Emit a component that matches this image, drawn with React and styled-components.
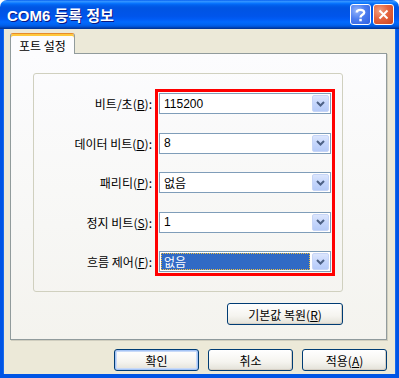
import React from "react";
import styled, { createGlobalStyle } from "styled-components";

const GlobalStyle = createGlobalStyle`
    html, body {
        margin: 0;
        padding: 0;
        background: #ffffff;
    }
    body {
        font-family: "Liberation Sans", "Noto Sans CJK KR", sans-serif;
        font-size: 12px;
        color: #000000;
    }
`;

const Window = styled.div`
    width: 399px;
    height: 378px;
    display: flex;
    flex-direction: column;
    box-sizing: border-box;
`;

const TitleBar = styled.div`
    height: 29px;
    flex: none;
    display: flex;
    align-items: center;
    padding: 0 5px 0 7px;
    border-radius: 7px 7px 0 0;
    background: linear-gradient(
        to bottom,
        #0058ee 0%,
        #3593ff 4%,
        #288eff 7%,
        #127dff 10%,
        #036ffc 13%,
        #0262ee 17%,
        #0057e5 24%,
        #0054e3 30%,
        #0055eb 56%,
        #005bf5 66%,
        #026afe 76%,
        #0062ef 86%,
        #0052d6 92%,
        #0040ab 96%,
        #003092 100%
    );
`;

const Title = styled.div`
    flex: 1;
    color: #ffffff;
    font-family: "Liberation Sans", "Noto Sans CJK KR", sans-serif;
    font-weight: bold;
    font-size: 15px;
    text-shadow: 1px 1px 0 #0a1883;
`;

const CaptionButton = styled.div`
    width: 21px;
    height: 21px;
    box-sizing: border-box;
    border: 1px solid #ffffff;
    border-radius: 3px;
    margin-left: 2px;
    display: flex;
    align-items: center;
    justify-content: center;
    background: ${(p) =>
        p.$close
            ? "radial-gradient(circle at 30% 30%, #f2a080 0%, #e4643f 45%, #cc4420 100%)"
            : "radial-gradient(circle at 30% 30%, #93b4fa 0%, #4d7ef0 45%, #2c5fe0 100%)"};
`;

const Body = styled.div`
    flex: 1;
    display: flex;
    flex-direction: column;
    background: #ece9d8;
    border-left: 3px solid #0055e5;
    border-right: 3px solid #0055e5;
    border-bottom: 4px solid #0055e5;
    box-shadow: inset 1px 0 0 #166aee, inset -1px 0 0 #166aee;
    padding: 4px 9px 0 7px;
`;

const TabRow = styled.div`
    display: flex;
    position: relative;
    z-index: 1;
    margin-bottom: -1px;
`;

const Tab = styled.div`
    height: 21px;
    box-sizing: border-box;
    padding: 3px 8px 0 8px;
    border: 1px solid #919b9c;
    border-bottom: none;
    border-top: 1px solid #e68b2c;
    border-radius: 3px 3px 0 0;
    box-shadow: inset 0 2px 0 #ffc83c;
    background: #fcfcfe;
    font-family: "Noto Sans CJK KR", sans-serif;
    font-size: 12px;
    line-height: 17px;
`;

const Panel = styled.div`
    height: 287px;
    box-sizing: border-box;
    border: 1px solid #919b9c;
    box-shadow: 1px 1px 0 #d0cebf;
    background: linear-gradient(to bottom, #fcfcfe 0%, #f7f7f5 60%, #f4f3ee 100%);
    padding: 19px 43px 0 22px;
    display: flex;
    flex-direction: column;
`;

const GroupBox = styled.div`
    height: 219px;
    box-sizing: border-box;
    border: 1px solid #d0d0bf;
    border-radius: 3px;
    padding: 15px 7px 0 0;
    display: flex;
    align-items: flex-start;
`;

const LabelColumn = styled.div`
    flex: 1;
    margin-right: 3px;
    padding-top: 4px;
    display: flex;
    flex-direction: column;
    gap: 18.5px;
`;

const Label = styled.div`
    height: 21px;
    line-height: 21px;
    text-align: right;
    font-family: "Noto Sans CJK KR", sans-serif;
    font-size: 12px;
    white-space: nowrap;
`;

const Highlight = styled.div`
    width: 180px;
    box-sizing: border-box;
    border: 3px solid #ff0000;
    padding: 1px;
    display: flex;
    flex-direction: column;
    gap: 18.5px;
`;

const Combo = styled.div`
    height: 21px;
    box-sizing: border-box;
    border: 1px solid #7f9db9;
    background: #ffffff;
    display: flex;
    align-items: stretch;
    padding: 1px;
`;

const ComboText = styled.div`
    flex: 1;
    display: flex;
    align-items: center;
    padding-left: 3px;
    margin-right: 2px;
    font-family: "Liberation Sans", "Noto Sans CJK KR", sans-serif;
    font-size: 12px;
    color: ${(p) => (p.$selected ? "#ffffff" : "#000000")};
    background: ${(p) => (p.$selected ? "#316ac5" : "transparent")};
    outline: ${(p) => (p.$selected ? "1px dotted #f0c040" : "none")};
    outline-offset: -1px;
`;

const DropButton = styled.div`
    width: 17px;
    box-sizing: border-box;
    border: 1px solid #c6d5f7;
    border-radius: 2px;
    background: linear-gradient(to bottom, #dce6fd 0%, #c5d6fc 50%, #b6cbf8 100%);
    display: flex;
    align-items: center;
    justify-content: center;
`;

const RestoreRow = styled.div`
    display: flex;
    justify-content: flex-end;
    margin-top: 11px;
`;

const Button = styled.div`
    width: ${(p) => p.$width || 85}px;
    height: 22px;
    box-sizing: border-box;
    border: 1px solid #003c74;
    border-radius: 3px;
    background: linear-gradient(to bottom, #ffffff 0%, #f5f4ef 60%, #e3e1d8 100%);
    box-shadow: ${(p) =>
        p.$default
            ? "inset 0 0 0 1px #a5c4f5, inset 0 0 0 2px #c8daf8"
            : "inset -1px -1px 0 #d6d0c5"};
    display: flex;
    align-items: center;
    justify-content: center;
    font-family: "Noto Sans CJK KR", sans-serif;
    font-size: 12px;
`;

const ButtonRow = styled.div`
    display: flex;
    justify-content: flex-end;
    gap: 9px;
    margin-top: 9px;
`;

const Chevron = () => (
    <svg width="9" height="6" viewBox="0 0 9 6">
        <polyline points="1,1 4.5,4.5 8,1" fill="none" stroke="#4d6185" strokeWidth="2" />
    </svg>
);

const fields = [
    { label: "비트/초", key: "B", value: "115200" },
    { label: "데이터 비트", key: "D", value: "8" },
    { label: "패리티", key: "P", value: "없음" },
    { label: "정지 비트", key: "S", value: "1" },
    { label: "흐름 제어", key: "F", value: "없음", selected: true },
];

const App = () => {
    return (
        <Window>
            <GlobalStyle />
            <TitleBar>
                <Title>COM6 등록 정보</Title>
                <CaptionButton>
                    <svg width="11" height="14" viewBox="0 0 11 14">
                        <path
                            d="M1.8 4.4 C1.8 1.2 9.2 1 9.2 4.4 C9.2 6.8 5.5 6.8 5.5 9.4"
                            fill="none"
                            stroke="#ffffff"
                            strokeWidth="2.4"
                        />
                        <rect x="4.3" y="10.8" width="2.5" height="2.5" fill="#ffffff" />
                    </svg>
                </CaptionButton>
                <CaptionButton $close>
                    <svg width="11" height="11" viewBox="0 0 11 11">
                        <path d="M1.5 1.5 L9.5 9.5 M9.5 1.5 L1.5 9.5" stroke="#ffffff" strokeWidth="2" />
                    </svg>
                </CaptionButton>
            </TitleBar>
            <Body>
                <TabRow>
                    <Tab>포트 설정</Tab>
                </TabRow>
                <Panel>
                    <GroupBox>
                        <LabelColumn>
                            {fields.map((f) => (
                                <Label key={f.key}>
                                    {f.label}(<u>{f.key}</u>):
                                </Label>
                            ))}
                        </LabelColumn>
                        <Highlight>
                            {fields.map((f) => (
                                <Combo key={f.key}>
                                    <ComboText $selected={f.selected}>{f.value}</ComboText>
                                    <DropButton>
                                        <Chevron />
                                    </DropButton>
                                </Combo>
                            ))}
                        </Highlight>
                    </GroupBox>
                    <RestoreRow>
                        <Button $width={116}>
                            기본값 복원(<u>R</u>)
                        </Button>
                    </RestoreRow>
                </Panel>
                <ButtonRow>
                    <Button $default>확인</Button>
                    <Button>취소</Button>
                    <Button>
                        적용(<u>A</u>)
                    </Button>
                </ButtonRow>
            </Body>
        </Window>
    );
};

export default App;
